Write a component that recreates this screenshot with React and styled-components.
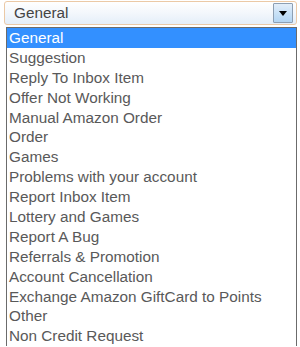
import React from "react";
import styled, { createGlobalStyle } from "styled-components";

const options = [
  "General",
  "Suggestion",
  "Reply To Inbox Item",
  "Offer Not Working",
  "Manual Amazon Order",
  "Order",
  "Games",
  "Problems with your account",
  "Report Inbox Item",
  "Lottery and Games",
  "Report A Bug",
  "Referrals & Promotion",
  "Account Cancellation",
  "Exchange Amazon GiftCard to Points",
  "Other",
  "Non Credit Request",
];

const GlobalStyle = createGlobalStyle`
  html, body {
    margin: 0;
    padding: 0;
    background: #fff;
    overflow: hidden;
  }
  body {
    font-family: "Liberation Sans", Arial, sans-serif;
  }
`;

const Page = styled.div`
  width: 300px;
  height: 347px;
  overflow: hidden;
  padding-top: 1px;
  box-sizing: border-box;
`;

const Select = styled.div`
  display: flex;
  align-items: center;
  justify-content: space-between;
  margin: 0 3px 0 4px;
  height: 24px;
  box-sizing: border-box;
  border: 1px solid #ebc9a6;
  border-radius: 3px;
  background: linear-gradient(to bottom, #ffffff 0%, #f3f7fc 50%, #e4eef9 100%);
  padding: 0 3px 0 9px;
`;

const SelectValue = styled.span`
  font-size: 15.3px;
  color: #444;
`;

const ArrowButton = styled.div`
  display: flex;
  align-items: center;
  justify-content: center;
  width: 20px;
  height: 20px;
  box-sizing: border-box;
  border: 1px solid #8d9fb3;
  border-radius: 1px;
  background: linear-gradient(to bottom, #e3eefa 0%, #c7e0f6 55%, #b3d5f3 100%);
`;

const List = styled.ul`
  list-style: none;
  margin: 2px 3px 0 6px;
  padding: 0;
  border-left: 1px solid #6b6b6b;
  border-right: 1px solid #6b6b6b;
  border-top: 1px solid #6b6b6b;
  background: #fff;
`;

const Item = styled.li`
  height: 19.9px;
  line-height: 19.9px;
  padding-left: 2px;
  font-size: 15.3px;
  color: ${(p) => (p.$active ? "#fff" : "#595959")};
  background: ${(p) => (p.$active ? "#3390ff" : "transparent")};
  white-space: nowrap;
`;

export default function App() {
  return (
    <Page>
      <GlobalStyle />
      <Select>
        <SelectValue>General</SelectValue>
        <ArrowButton>
          <svg width="8" height="5" viewBox="0 0 8 5">
            <path d="M0 0 H8 L4 5 Z" fill="#000" />
          </svg>
        </ArrowButton>
      </Select>
      <List>
        {options.map((o, i) => (
          <Item key={o} $active={i === 0}>
            {o}
          </Item>
        ))}
      </List>
    </Page>
  );
}
